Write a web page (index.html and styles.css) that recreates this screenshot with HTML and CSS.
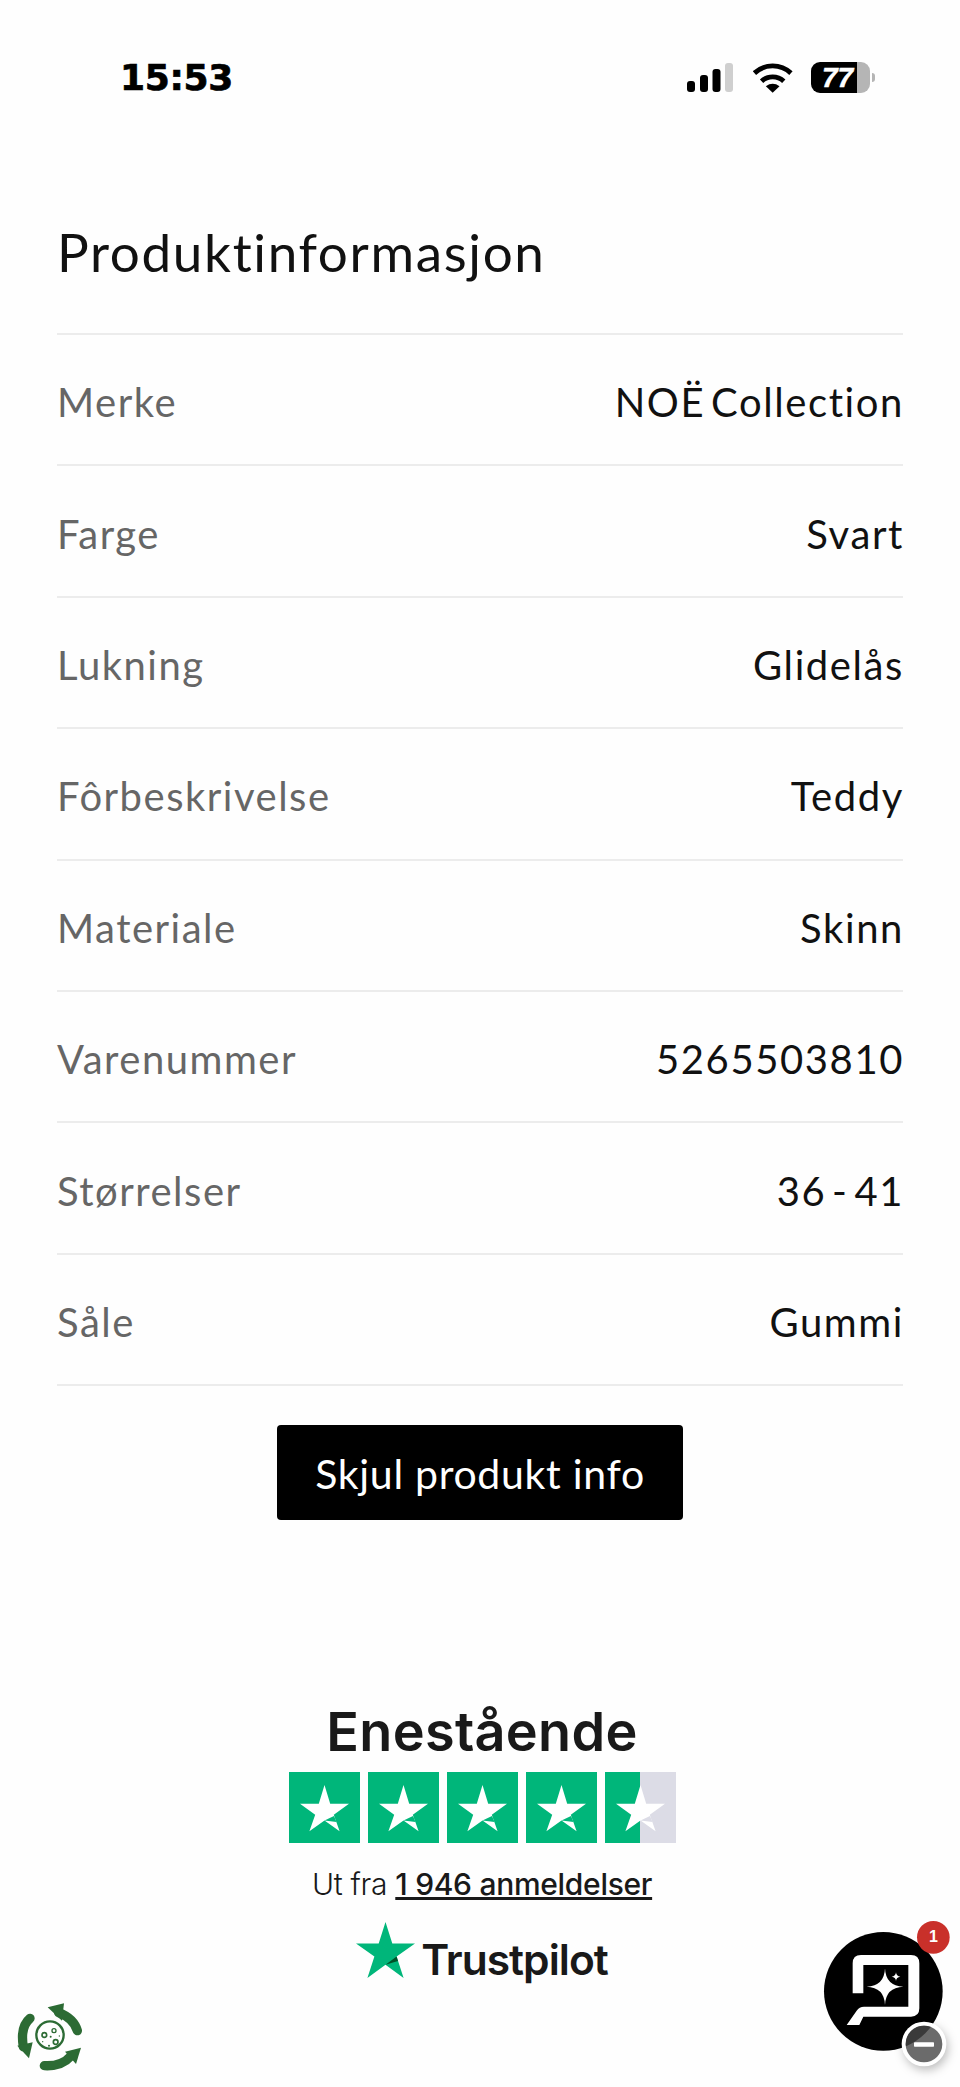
FILE: index.html
```html
<!DOCTYPE html>
<html lang="no">
<head>
  <meta charset="UTF-8">
  <meta name="viewport" content="width=device-width, initial-scale=1.0">
  <title>Produktinformasjon</title>
  <link rel="stylesheet" href="styles.css">
</head>
<body>
  <svg class="defs" width="0" height="0">
    <symbol id="tp-star" viewBox="0 0 71 71">
      <polygon fill="#fff" points="35.5,13 41.2,31.7 60,31.7 44.8,42.7 50.6,59.3 35.5,48.6 20.4,59.3 26.2,42.7 11,31.7 29.8,31.7"/>
      <polygon fill="currentColor" points="35.5,48.6 45,44 47.5,50"/>
    </symbol>
  </svg>

  <div class="statusbar">
    <span class="time">15:53</span>
    <div class="status-icons">
      <svg class="signal" viewBox="0 0 46 29" width="46" height="29">
        <rect x="0" y="18" width="8" height="11" rx="3"/>
        <rect x="13" y="12" width="8" height="17" rx="3"/>
        <rect x="25.5" y="6" width="8" height="23" rx="3"/>
        <rect x="38" y="0" width="8" height="29" rx="3" fill="#cfcfcf"/>
      </svg>
      <svg class="wifi" viewBox="278 66 120 92" width="40" height="30">
        <path d="M281 97 A82 82 0 0 1 393 97" fill="none" stroke="#000" stroke-width="15"/>
        <path d="M303 122 A50 50 0 0 1 371 122" fill="none" stroke="#000" stroke-width="15"/>
        <path d="M337 157 L316 137 Q337 122 358 137 Z"/>
      </svg>
      <div class="battery"><span>77</span></div>
      <div class="battery-nub"></div>
    </div>
  </div>

  <main class="page">
    <h1>Produktinformasjon</h1>

    <div class="spec-list">
      <div class="spec"><span class="spec-label">Merke</span><span class="spec-value">NOË Collection</span></div>
      <div class="spec"><span class="spec-label">Farge</span><span class="spec-value">Svart</span></div>
      <div class="spec"><span class="spec-label">Lukning</span><span class="spec-value">Glidelås</span></div>
      <div class="spec"><span class="spec-label">Fôrbeskrivelse</span><span class="spec-value">Teddy</span></div>
      <div class="spec"><span class="spec-label">Materiale</span><span class="spec-value">Skinn</span></div>
      <div class="spec"><span class="spec-label">Varenummer</span><span class="spec-value">5265503810</span></div>
      <div class="spec"><span class="spec-label">Størrelser</span><span class="spec-value">36 - 41</span></div>
      <div class="spec"><span class="spec-label">Såle</span><span class="spec-value">Gummi</span></div>
    </div>

    <div class="toggle-wrap">
      <button class="toggle">Skjul produkt info</button>
    </div>

    <section class="trust">
      <div class="trust-title">Enestående</div>
      <div class="trust-stars">
        <div class="star-box"><svg width="71" height="71"><use href="#tp-star"/></svg></div>
        <div class="star-box"><svg width="71" height="71"><use href="#tp-star"/></svg></div>
        <div class="star-box"><svg width="71" height="71"><use href="#tp-star"/></svg></div>
        <div class="star-box"><svg width="71" height="71"><use href="#tp-star"/></svg></div>
        <div class="star-box half"><svg width="71" height="71"><use href="#tp-star"/></svg></div>
      </div>
      <p class="trust-count">Ut fra <a href="#">1 946 anmeldelser</a></p>
      <div class="trust-logo">
        <svg viewBox="0 0 59 56" width="59" height="56">
          <polygon fill="#00b67a" points="29.5,0 36.3,21.4 59,21.4 40.6,34.6 47.6,56 29.5,42.8 11.4,56 18.4,34.6 0,21.4 22.7,21.4"/>
          <polygon fill="#005128" points="29.5,42.8 40.6,34.6 42,39"/>
        </svg>
        <span>Trustpilot</span>
      </div>
    </section>
  </main>

  <svg class="recycle" viewBox="0 0 330 321" width="110" height="107">
    <g fill="none" stroke="#2c6b34" stroke-width="28" stroke-linecap="round">
      <path d="M232 152 Q221 115 176 98"/>
      <path d="M90 115 Q60 140 70 200"/>
      <path d="M133 257 Q185 260 213 228"/>
    </g>
    <g fill="#2c6b34">
      <polygon points="143,82 192,70 186,122"/>
      <polygon points="52,197 98,187 87,235"/>
      <polygon points="195,215 243,203 228,252"/>
    </g>
    <g fill="none" stroke="#2c6b34">
      <circle cx="150" cy="165" r="41" stroke-width="7"/>
      <circle cx="133" cy="165" r="7" stroke-width="5"/>
      <circle cx="162" cy="152" r="6" stroke-width="4"/>
      <circle cx="167" cy="186" r="7" stroke-width="5"/>
    </g>
    <g fill="#2c6b34">
      <circle cx="152" cy="170" r="3"/>
      <circle cx="147" cy="197" r="3"/>
      <circle cx="128" cy="185" r="2"/>
      <circle cx="178" cy="168" r="2"/>
    </g>
  </svg>

  <svg class="chat" viewBox="0 0 480 561" width="160" height="187">
    <defs>
      <clipPath id="minus-clip"><circle cx="372" cy="432" r="55"/></clipPath>
    </defs>
    <circle cx="250" cy="274" r="178" fill="#000"/>
    <path fill="#fff" d="M158 280 V190 Q158 165 183 165 H333 Q358 165 358 190 V325 Q358 350 333 350 H190 L178 375 H140 L170 332 Q178 320 192 320 H325 V195 H190 V280 Z"/>
    <path fill="#fff" d="M255 205 Q257 258 310 260 Q257 262 255 315 Q253 262 200 260 Q253 258 255 205 Z"/>
    <path fill="#fff" d="M288 217 Q289 229 301 230 Q289 231 288 243 Q287 231 275 230 Q287 229 288 217 Z"/>
    <circle cx="400" cy="112" r="49" fill="#c9302a"/>
    <text x="400" y="126" class="chat-count">1</text>
    <g class="minus">
      <circle cx="372" cy="432" r="67" fill="#fff"/>
      <circle cx="372" cy="432" r="55" fill="#6b6b6b"/>
      <circle cx="250" cy="274" r="178" fill="#3a3a3a" clip-path="url(#minus-clip)"/>
      <rect x="342" y="427" width="60" height="13" rx="2" fill="#fff"/>
    </g>
  </svg>
</body>
</html>
```

FILE: styles.css
```css
* {
  box-sizing: border-box;
}
html, body {
  margin: 0;
}
body {
  position: relative;
  width: 960px;
  height: 2087px;
  overflow: hidden;
  background: #fefefe;
  font-family: "Lato", sans-serif;
  font-variant-ligatures: none;
  color: #111;
}
.defs {
  position: absolute;
}

/* status bar */
.statusbar {
  display: flex;
  justify-content: space-between;
  align-items: center;
  height: 155px;
  padding: 0 85px 0 120px;
}
.time {
  font-family: "DejaVu Sans", sans-serif;
  font-weight: 700;
  font-size: 36px;
  letter-spacing: -.3px;
  -webkit-text-stroke: .7px #000;
  color: #000;
}
.status-icons {
  display: flex;
  align-items: center;
}
.signal {
  margin-right: 20px;
}
.wifi {
  margin-right: 18px;
}
.battery {
  display: flex;
  align-items: center;
  width: 59px;
  height: 31px;
  padding-left: 11px;
  border-radius: 9px;
  background: linear-gradient(90deg, #000 78%, #b5b5b5 78%);
  color: #fff;
  font-family: "Liberation Sans", sans-serif;
  font-weight: 700;
  font-style: italic;
  font-size: 28px;
  -webkit-text-stroke: .5px #fff;
}
.battery-nub {
  width: 3px;
  height: 9px;
  margin-left: 2px;
  border-radius: 0 3px 3px 0;
  background: #b5b5b5;
}

/* spec table */
.page {
  padding: 0 57px;
}
h1 {
  margin: 0;
  height: 180px;
  padding-top: 65px;
  font-weight: 400;
  font-size: 53px;
  line-height: 64px;
  letter-spacing: 1.65px;
  border-bottom: 2px solid #ececec;
  color: #111;
}
.spec {
  display: flex;
  justify-content: space-between;
  align-items: center;
  height: 131.4px;
  padding-top: 5px;
  border-bottom: 2px solid #ececec;
  font-size: 40px;
}
.spec-label {
  color: #666;
  letter-spacing: 1.5px;
}
.spec-value {
  color: #111;
  letter-spacing: 1.6px;
  word-spacing: -6px;
  margin-right: -1px;
}
.toggle-wrap {
  display: flex;
  justify-content: center;
  padding-top: 39px;
}
.toggle {
  width: 406px;
  height: 95px;
  padding-top: 3px;
  border: none;
  border-radius: 4px;
  background: #000;
  color: #fff;
  font-family: "Lato", sans-serif;
  font-size: 41px;
  letter-spacing: .7px;
}

/* trustpilot */
.trust {
  display: flex;
  flex-direction: column;
  align-items: center;
  padding-top: 180px;
}
.trust-title {
  font-family: "Inter", sans-serif;
  font-weight: 600;
  font-size: 54px;
  line-height: 64px;
  letter-spacing: .3px;
  color: #191919;
  margin-left: 4px;
}
.trust-stars {
  display: flex;
  gap: 8px;
  margin: 8px 0 0 4px;
}
.star-box {
  width: 71px;
  height: 71px;
  background: #00b67a;
  color: #00b67a;
}
.star-box svg {
  display: block;
}
.star-box.half {
  background: linear-gradient(90deg, #00b67a 50%, #dcdce6 50%);
  color: #dcdce6;
}
.trust-count {
  margin: 23px 0 0 4px;
  font-family: "Inter", sans-serif;
  font-weight: 300;
  font-size: 30px;
  line-height: 36px;
  letter-spacing: -.3px;
  color: #191919;
}
.trust-count a {
  color: #191919;
  font-weight: 500;
}
.trust-logo {
  display: flex;
  align-items: flex-end;
  gap: 6px;
  margin: 20px 0 0 4px;
  font-family: "Inter", sans-serif;
  font-weight: 600;
  font-size: 42.5px;
  line-height: 50px;
  letter-spacing: -1px;
  color: #191919;
}
.trust-logo span {
  margin-bottom: -7px;
}

/* floating widgets */
.recycle {
  position: absolute;
  left: 0;
  bottom: 0;
}
.chat {
  position: absolute;
  right: 0;
  bottom: 0;
}
.chat-count {
  fill: #fff;
  font-family: "Liberation Sans", sans-serif;
  font-weight: 700;
  font-size: 48px;
  text-anchor: middle;
}
.minus {
  filter: drop-shadow(6px 12px 14px rgba(0, 0, 0, .25));
}
```
